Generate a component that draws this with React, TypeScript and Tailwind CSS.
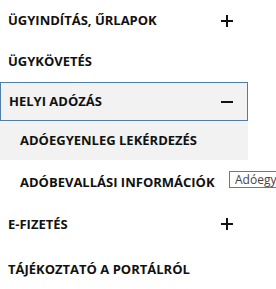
const itemText = "font-['Open_Sans',sans-serif] text-[13px] font-bold uppercase leading-none text-[#111]";

function Plus() {
  return (
    <svg width="12" height="12" viewBox="0 0 12 12" className="shrink-0">
      <path d="M6 0v12M0 6h12" stroke="#111" strokeWidth="2" />
    </svg>
  );
}

function Minus() {
  return (
    <svg width="12" height="12" viewBox="0 0 12 12" className="shrink-0">
      <path d="M0 6h12" stroke="#111" strokeWidth="2" />
    </svg>
  );
}

export default function App() {
  return (
    <div className="relative h-[289px] w-[276px] overflow-hidden bg-white">
      <ul className="w-[248px]">
        <li className="flex h-[41px] items-center justify-between pl-2 pr-[15px]">
          <span className={itemText}>Ügyindítás, űrlapok</span>
          <Plus />
        </li>
        <li className="flex h-[41px] items-center pl-2">
          <span className={itemText}>Ügykövetés</span>
        </li>
        <li>
          <div className="flex h-[39px] items-center justify-between border border-[#4f7fa6] bg-[#f2f2f2] pl-2 pr-[14px]">
            <span className={itemText}>Helyi adózás</span>
            <Minus />
          </div>
          <ul>
            <li className="flex h-[39px] items-center bg-[#f2f2f2] pl-5">
              <span className={itemText}>Adóegyenleg lekérdezés</span>
            </li>
            <li className="flex h-[44px] items-center pl-5">
              <span className={itemText}>Adóbevallási információk</span>
            </li>
          </ul>
        </li>
        <li className="flex h-[40px] items-center justify-between pl-2 pr-[15px]">
          <span className={itemText}>E-fizetés</span>
          <Plus />
        </li>
        <li className="flex h-[50px] items-center pl-2">
          <span className={itemText}>Tájékoztató a portálról</span>
        </li>
      </ul>
      <div className="absolute left-[229px] top-[171px] flex h-[17px] items-center whitespace-nowrap border border-[#767676] bg-white px-[5px] font-['Open_Sans',sans-serif] text-[12px] text-[#444]">
        Adóegyenleg lekérdezés
      </div>
    </div>
  );
}
